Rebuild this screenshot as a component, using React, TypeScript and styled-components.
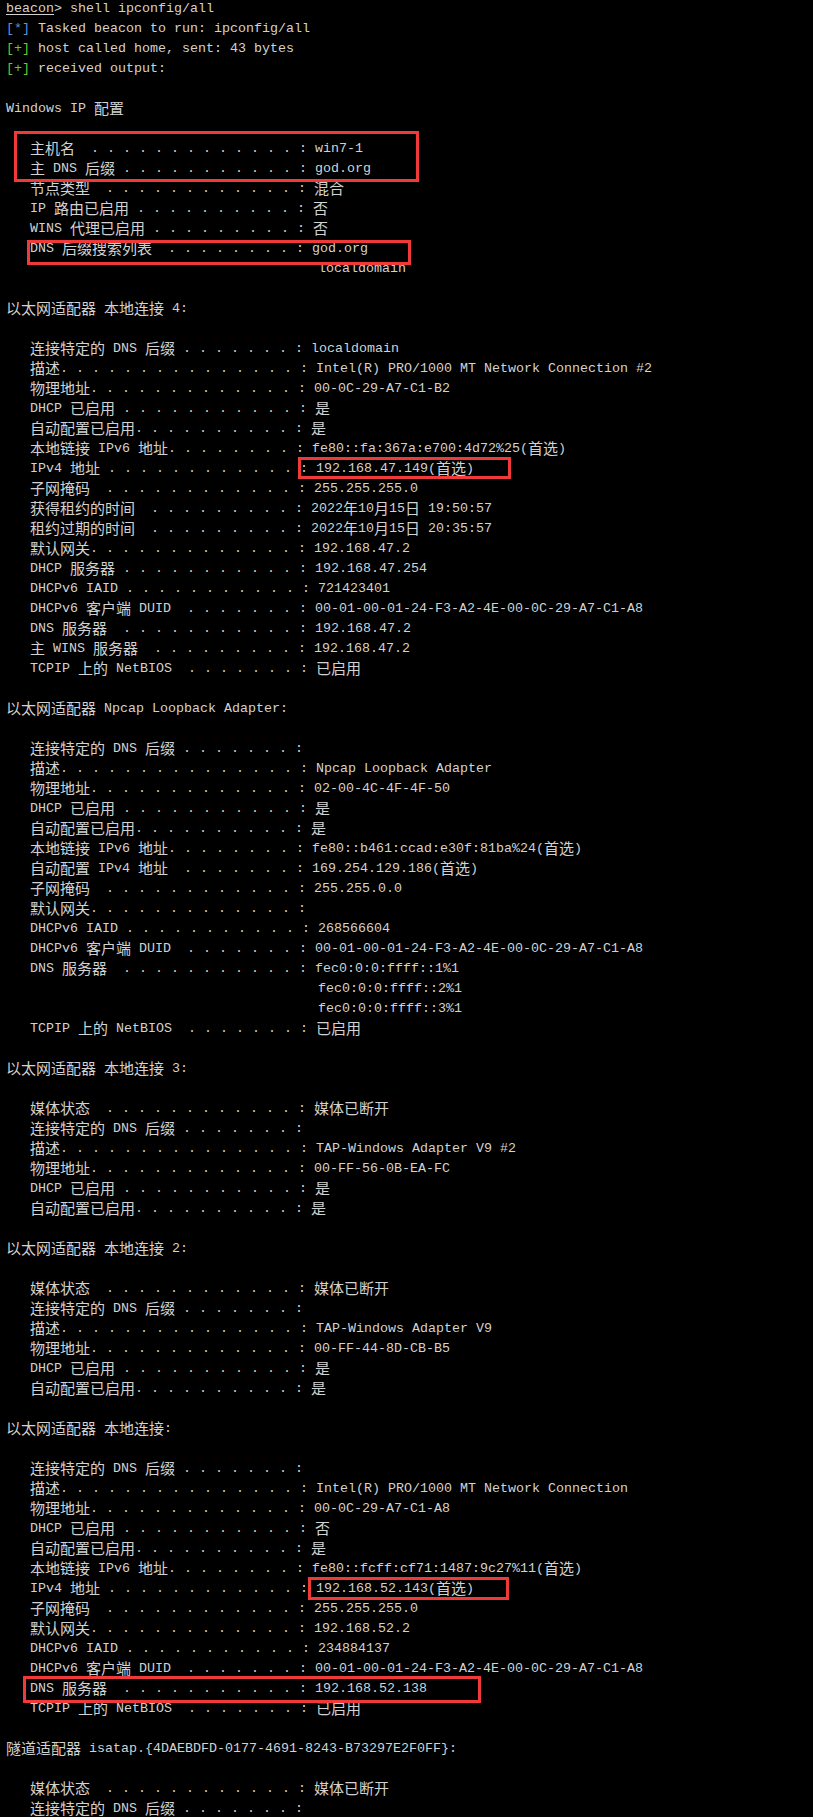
import React from "react";
import styled, { createGlobalStyle } from "styled-components";

const GlobalStyle = createGlobalStyle`
  html, body {
    margin: 0;
    padding: 0;
    background: #000;
  }
`;

const Screen = styled.div`
  position: relative;
  box-sizing: border-box;
  width: 813px;
  height: 1817px;
  padding: 0 0 0 6px;
  background: #000;
  color: #d2d2d2;
  font-family: "Liberation Mono", "Courier New", monospace;
  font-size: 13.333px;
  overflow: hidden;
`;

const Line = styled.div`
  height: 20px;
  line-height: 18px;
  white-space: pre;
`;

const Cjk = styled.span`
  font-family: "Noto Sans CJK SC", "Noto Sans CJK TC", sans-serif;
  font-size: 15px;
  line-height: 0;
  vertical-align: -1.5px;
`;

const Tag = styled.span<{ $tone: "info" | "ok" }>`
  color: ${(p) => (p.$tone === "info" ? "#5b93dc" : "#62cc2e")};
`;

const Beacon = styled.span`
  text-decoration: underline;
  text-underline-offset: 2px;
`;

const Mark = styled.div<{ $x: number; $y: number; $w: number; $h: number }>`
  position: absolute;
  left: ${(p) => p.$x}px;
  top: ${(p) => p.$y}px;
  width: ${(p) => p.$w}px;
  height: ${(p) => p.$h}px;
  box-sizing: border-box;
  border: 3px solid #f03a3a;
  pointer-events: none;
`;

const CJK_RE = /[\u2E80-\u9FFF\u3000-\u303F\uFF00-\uFFEF]/;
const CJK_SPLIT = /([\u2E80-\u9FFF\u3000-\u303F\uFF00-\uFFEF]+)/;

const cols = (s: string) =>
  Array.from(s).reduce((n, ch) => n + (CJK_RE.test(ch) ? 2 : 1), 0);

function field(label: string, value = "", pad = 0): string {
  let s = "   " + label + " ".repeat(pad);
  let col = 3 + cols(label) + pad;
  while (col < 37) {
    s += col % 2 === 1 ? "." : " ";
    col++;
  }
  return s + ": " + value;
}

const cont = (value: string) => " ".repeat(39) + value;

type Row =
  | { kind: "prompt" }
  | { kind: "tag"; tone: "info" | "ok"; tag: string; text: string }
  | { kind: "text"; text: string };

const t = (text: string): Row => ({ kind: "text", text });
const blank = t("");

const rows: Row[] = [
  { kind: "prompt" },
  { kind: "tag", tone: "info", tag: "[*]", text: " Tasked beacon to run: ipconfig/all" },
  { kind: "tag", tone: "ok", tag: "[+]", text: " host called home, sent: 43 bytes" },
  { kind: "tag", tone: "ok", tag: "[+]", text: " received output:" },
  blank,
  t("Windows IP 配置"),
  blank,
  t(field("主机名", "win7-1", 2)),
  t(field("主 DNS 后缀", "god.org")),
  t(field("节点类型", "混合", 2)),
  t(field("IP 路由已启用", "否")),
  t(field("WINS 代理已启用", "否")),
  t(field("DNS 后缀搜索列表", "god.org", 2)),
  t(cont("localdomain")),
  blank,
  t("以太网适配器 本地连接 4:"),
  blank,
  t(field("连接特定的 DNS 后缀", "localdomain")),
  t(field("描述", "Intel(R) PRO/1000 MT Network Connection #2")),
  t(field("物理地址", "00-0C-29-A7-C1-B2")),
  t(field("DHCP 已启用", "是")),
  t(field("自动配置已启用", "是")),
  t(field("本地链接 IPv6 地址", "fe80::fa:367a:e700:4d72%25(首选)")),
  t(field("IPv4 地址", "192.168.47.149(首选)")),
  t(field("子网掩码", "255.255.255.0", 2)),
  t(field("获得租约的时间", "2022年10月15日 19:50:57", 2)),
  t(field("租约过期的时间", "2022年10月15日 20:35:57", 2)),
  t(field("默认网关", "192.168.47.2")),
  t(field("DHCP 服务器", "192.168.47.254")),
  t(field("DHCPv6 IAID", "721423401")),
  t(field("DHCPv6 客户端 DUID", "00-01-00-01-24-F3-A2-4E-00-0C-29-A7-C1-A8", 2)),
  t(field("DNS 服务器", "192.168.47.2", 2)),
  t(field("主 WINS 服务器", "192.168.47.2", 2)),
  t(field("TCPIP 上的 NetBIOS", "已启用", 2)),
  blank,
  t("以太网适配器 Npcap Loopback Adapter:"),
  blank,
  t(field("连接特定的 DNS 后缀")),
  t(field("描述", "Npcap Loopback Adapter")),
  t(field("物理地址", "02-00-4C-4F-4F-50")),
  t(field("DHCP 已启用", "是")),
  t(field("自动配置已启用", "是")),
  t(field("本地链接 IPv6 地址", "fe80::b461:ccad:e30f:81ba%24(首选)")),
  t(field("自动配置 IPv4 地址", "169.254.129.186(首选)", 2)),
  t(field("子网掩码", "255.255.0.0", 2)),
  t(field("默认网关")),
  t(field("DHCPv6 IAID", "268566604")),
  t(field("DHCPv6 客户端 DUID", "00-01-00-01-24-F3-A2-4E-00-0C-29-A7-C1-A8", 2)),
  t(field("DNS 服务器", "fec0:0:0:ffff::1%1", 2)),
  t(cont("fec0:0:0:ffff::2%1")),
  t(cont("fec0:0:0:ffff::3%1")),
  t(field("TCPIP 上的 NetBIOS", "已启用", 2)),
  blank,
  t("以太网适配器 本地连接 3:"),
  blank,
  t(field("媒体状态", "媒体已断开", 2)),
  t(field("连接特定的 DNS 后缀")),
  t(field("描述", "TAP-Windows Adapter V9 #2")),
  t(field("物理地址", "00-FF-56-0B-EA-FC")),
  t(field("DHCP 已启用", "是")),
  t(field("自动配置已启用", "是")),
  blank,
  t("以太网适配器 本地连接 2:"),
  blank,
  t(field("媒体状态", "媒体已断开", 2)),
  t(field("连接特定的 DNS 后缀")),
  t(field("描述", "TAP-Windows Adapter V9")),
  t(field("物理地址", "00-FF-44-8D-CB-B5")),
  t(field("DHCP 已启用", "是")),
  t(field("自动配置已启用", "是")),
  blank,
  t("以太网适配器 本地连接:"),
  blank,
  t(field("连接特定的 DNS 后缀")),
  t(field("描述", "Intel(R) PRO/1000 MT Network Connection")),
  t(field("物理地址", "00-0C-29-A7-C1-A8")),
  t(field("DHCP 已启用", "否")),
  t(field("自动配置已启用", "是")),
  t(field("本地链接 IPv6 地址", "fe80::fcff:cf71:1487:9c27%11(首选)")),
  t(field("IPv4 地址", "192.168.52.143(首选)")),
  t(field("子网掩码", "255.255.255.0", 2)),
  t(field("默认网关", "192.168.52.2")),
  t(field("DHCPv6 IAID", "234884137")),
  t(field("DHCPv6 客户端 DUID", "00-01-00-01-24-F3-A2-4E-00-0C-29-A7-C1-A8", 2)),
  t(field("DNS 服务器", "192.168.52.138", 2)),
  t(field("TCPIP 上的 NetBIOS", "已启用", 2)),
  blank,
  t("隧道适配器 isatap.{4DAEBDFD-0177-4691-8243-B73297E2F0FF}:"),
  blank,
  t(field("媒体状态", "媒体已断开", 2)),
  t(field("连接特定的 DNS 后缀")),
];

const marks = [
  { x: 14, y: 131, w: 405, h: 51 },
  { x: 27, y: 240, w: 384, h: 25 },
  { x: 298, y: 457, w: 213, h: 22 },
  { x: 308, y: 1577, w: 201, h: 23 },
  { x: 23, y: 1676, w: 458, h: 27 },
];

function Text({ value }: { value: string }) {
  const parts = value.split(CJK_SPLIT);
  return (
    <>
      {parts.map((part, i) =>
        i % 2 === 1 ? <Cjk key={i}>{part}</Cjk> : <React.Fragment key={i}>{part}</React.Fragment>
      )}
    </>
  );
}

function TermLine({ row }: { row: Row }) {
  if (row.kind === "prompt") {
    return (
      <Line>
        <Beacon>beacon</Beacon>
        {"> shell ipconfig/all"}
      </Line>
    );
  }
  if (row.kind === "tag") {
    return (
      <Line>
        <Tag $tone={row.tone}>{row.tag}</Tag>
        <Text value={row.text} />
      </Line>
    );
  }
  return (
    <Line>
      <Text value={row.text} />
    </Line>
  );
}

export default function App() {
  return (
    <>
      <GlobalStyle />
      <Screen>
        {rows.map((row, i) => (
          <TermLine key={i} row={row} />
        ))}
        {marks.map((m, i) => (
          <Mark key={i} $x={m.x} $y={m.y} $w={m.w} $h={m.h} />
        ))}
      </Screen>
    </>
  );
}
